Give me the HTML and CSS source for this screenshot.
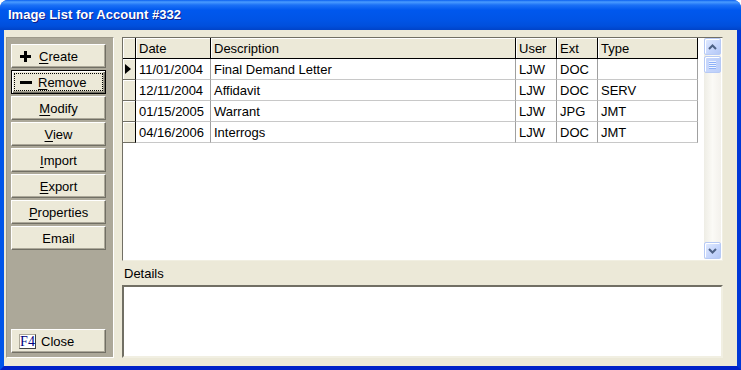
FILE: index.html
```html
<!DOCTYPE html>
<html lang="en">
<head>
    <meta charset="UTF-8">
    <title>Image List for Account #332</title>
    <link rel="stylesheet" href="styles.css">
</head>
<body>
    <div class="window">
        <div class="titlebar">Image List for Account #332</div>
        <div class="client">
            <div class="side">
                <button class="btn btn_icon">
                    <svg width="11" height="11" viewBox="0 0 11 11"><path d="M4 0h3v4h4v3H7v4H4V7H0V4h4z"/></svg>
                    <span><u>C</u>reate</span>
                </button>
                <button class="btn btn_icon btn_default">
                    <span class="focus">
                        <svg width="12" height="11" viewBox="0 0 12 11"><path d="M0 4h12v3H0z"/></svg>
                        <span><u>R</u>emove</span>
                    </span>
                </button>
                <button class="btn"><span><u>M</u>odify</span></button>
                <button class="btn"><span><u>V</u>iew</span></button>
                <button class="btn"><span><u>I</u>mport</span></button>
                <button class="btn"><span><u>E</u>xport</span></button>
                <button class="btn"><span><u>P</u>roperties</span></button>
                <button class="btn"><span>Email</span></button>
                <button class="btn btn_close"><span class="key">F4</span><span>Close</span></button>
            </div>

            <div class="main">
                <div class="grid">
                    <table class="list">
                        <colgroup>
                            <col class="c_ind"><col class="c_date"><col class="c_desc">
                            <col class="c_user"><col class="c_ext"><col class="c_type">
                        </colgroup>
                        <thead>
                            <tr>
                                <th class="ind"></th>
                                <th>Date</th>
                                <th>Description</th>
                                <th>User</th>
                                <th>Ext</th>
                                <th>Type</th>
                            </tr>
                        </thead>
                        <tbody>
                            <tr>
                                <td class="ind"><span class="arrow"></span></td>
                                <td>11/01/2004</td>
                                <td>Final Demand Letter</td>
                                <td>LJW</td>
                                <td>DOC</td>
                                <td></td>
                            </tr>
                            <tr>
                                <td class="ind"></td>
                                <td>12/11/2004</td>
                                <td>Affidavit</td>
                                <td>LJW</td>
                                <td>DOC</td>
                                <td>SERV</td>
                            </tr>
                            <tr>
                                <td class="ind"></td>
                                <td>01/15/2005</td>
                                <td>Warrant</td>
                                <td>LJW</td>
                                <td>JPG</td>
                                <td>JMT</td>
                            </tr>
                            <tr>
                                <td class="ind"></td>
                                <td>04/16/2006</td>
                                <td>Interrogs</td>
                                <td>LJW</td>
                                <td>DOC</td>
                                <td>JMT</td>
                            </tr>
                        </tbody>
                    </table>
                    <div class="spacer"></div>
                    <div class="scroll">
                        <div class="sb_btn">
                            <svg width="9" height="6" viewBox="0 0 9 6"><path d="M1 5l3.5-3.5L8 5" fill="none" stroke="#4d6185" stroke-width="2"/></svg>
                        </div>
                        <div class="sb_thumb"><span></span><span></span><span></span><span></span></div>
                        <div class="sb_track"></div>
                        <div class="sb_btn">
                            <svg width="9" height="6" viewBox="0 0 9 6"><path d="M1 1l3.5 3.5L8 1" fill="none" stroke="#4d6185" stroke-width="2"/></svg>
                        </div>
                    </div>
                </div>
                <div class="details_label">Details</div>
                <div class="details"></div>
            </div>
        </div>
    </div>
</body>
</html>
```

FILE: styles.css
```css
* {
    margin: 0;
    padding: 0;
    box-sizing: border-box;
}

body {
    width: 741px;
    height: 370px;
    background: #fff;
    font-family: "Liberation Sans", Arial, sans-serif;
    font-size: 13px;
    color: #000;
}

.window {
    width: 741px;
    height: 370px;
    display: flex;
    flex-direction: column;
    background: #0a4ce0;
    border-radius: 8px 8px 0 0;
    overflow: hidden;
}

.titlebar {
    height: 30px;
    line-height: 30px;
    padding-left: 8px;
    color: #fff;
    font-weight: bold;
    font-size: 13px;
    text-shadow: 1px 1px #0f1e8a;
    background: linear-gradient(#0a5ff0 0, #4a9cff 2px, #1c71f6 5px, #0058ee 10px, #0054e6 20px, #004fdc 26px, #0043c8 30px);
}

.client {
    flex: 1;
    display: flex;
    gap: 8px;
    padding: 7px 14px 8px 2px;
    background: #ece9d8;
    border-left: 4px solid #0055ea;
    border-right: 4px solid #0037d6;
    border-bottom: 4px solid #0021c8;
}

/* left button panel */
.side {
    width: 108px;
    display: flex;
    flex-direction: column;
    gap: 2px;
    padding: 6px 6px 4px 4px;
    background: #aca899;
    border: 1px solid;
    border-color: #9d998a #fff #fff #9d998a;
}

.btn {
    width: 95px;
    height: 24px;
    display: flex;
    align-items: center;
    justify-content: center;
    font-family: "Liberation Sans", Arial, sans-serif;
    font-size: 13px;
    color: #000;
    background: #ece9d8;
    border: 1px solid;
    border-color: #fff #716f64 #716f64 #fff;
    box-shadow: inset -1px -1px #aca899;
}

.btn u {
    text-decoration: underline;
    text-underline-offset: 2px;
}

.btn_icon {
    justify-content: flex-start;
    padding-left: 8px;
    gap: 8px;
}

.btn_default {
    border: 1px solid #000;
    padding: 2px;
    box-shadow: inset 1px 1px #fff, inset -1px -1px #716f64, inset -2px -2px #aca899;
}

.btn_default .focus {
    flex: 1;
    height: 100%;
    display: flex;
    align-items: center;
    gap: 6px;
    padding-left: 5px;
    border: 1px dotted #000;
}

.btn_close {
    margin-top: auto;
    justify-content: flex-start;
    padding-left: 7px;
    gap: 5px;
}

.key {
    width: 17px;
    height: 15px;
    line-height: 13px;
    text-align: center;
    font-family: "Liberation Serif", "Times New Roman", serif;
    font-size: 14px;
    color: #000080;
    background: #fff;
    border: 1px solid;
    border-color: #aca899 #404040 #404040 #aca899;
}

/* list area */
.main {
    flex: 1;
    display: flex;
    flex-direction: column;
}

.grid {
    height: 224px;
    display: flex;
    background: #fff;
    border: 1px solid;
    border-color: #716f64 #f1efe2 #f1efe2 #716f64;
    padding-right: 1px;
    padding-bottom: 1px;
}

.list {
    width: 575px;
    table-layout: fixed;
    border-collapse: separate;
    border-spacing: 0;
    align-self: flex-start;
}

.c_ind { width: 13px; }
.c_date { width: 75px; }
.c_desc { width: 305px; }
.c_user { width: 41px; }
.c_ext { width: 41px; }
.c_type { width: 100px; }

.list th,
.list td {
    height: 21px;
    padding: 0 3px;
    text-align: left;
    font-weight: normal;
    white-space: nowrap;
    overflow: hidden;
}

.list th {
    background: #ece9d8;
    border-right: 1px solid #000;
    border-bottom: 1px solid #000;
    box-shadow: inset 1px 1px #fff;
}

.list td {
    border-right: 1px solid #a0a0a0;
    border-bottom: 1px solid #c8c8c8;
}

.list td.ind {
    padding: 0;
    background: #ece9d8;
    border-right: 1px solid #000;
    border-bottom: 1px solid #716f64;
    box-shadow: inset 1px 1px #fff;
}

.arrow {
    display: block;
    width: 0;
    height: 0;
    margin-left: 2px;
    border-top: 5px solid transparent;
    border-bottom: 5px solid transparent;
    border-left: 6px solid #000;
}

.spacer {
    flex: 1;
}

.scroll {
    width: 17px;
    display: flex;
    flex-direction: column;
    background: linear-gradient(to right, #eeede5, #fbfaf6 50%, #f3f1ec);
}

.sb_btn {
    height: 17px;
    display: flex;
    align-items: center;
    justify-content: center;
    border: 1px solid #b7caf5;
    border-radius: 2px;
    background: linear-gradient(135deg, #e2ebfe, #c5d5fc 60%, #b4c8f6);
    box-shadow: inset 1px 1px #fff;
}

.sb_thumb {
    height: 17px;
    margin-top: 1px;
    display: flex;
    flex-direction: column;
    align-items: center;
    justify-content: center;
    gap: 1px;
    border: 1px solid #b7caf5;
    border-radius: 2px;
    background: linear-gradient(to right, #c9d8fc, #bccffa);
    box-shadow: inset 1px 1px #fff;
}

.sb_thumb span {
    width: 7px;
    height: 1px;
    background: #eef4fe;
    box-shadow: 0 1px #8cb0f8;
}

.sb_track {
    flex: 1;
}

.details_label {
    height: 24px;
    line-height: 25px;
    padding-left: 2px;
}

.details {
    flex: 1;
    background: #fff;
    border: 2px solid;
    border-color: #716f64 #f1efe2 #f1efe2 #716f64;
}
```
